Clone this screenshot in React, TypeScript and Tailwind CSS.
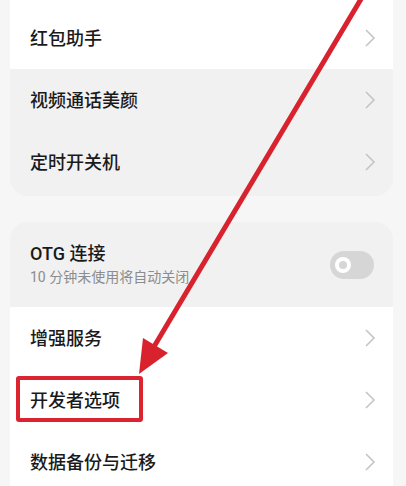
import React from 'react';

const font = { fontFamily: 'Roboto, "Noto Sans CJK SC", sans-serif' };
const titleFont = { fontFamily: 'Roboto, "Noto Sans CJK SC Medium", "Noto Sans CJK SC", sans-serif' };

function Chevron() {
  return (
    <svg width="12" height="20" viewBox="0 0 12 20" className="shrink-0">
      <path d="M2 2 L10 10 L2 18" fill="none" stroke="#c4c4c4" strokeWidth="1.6" />
    </svg>
  );
}

function Row({ label, gray }: { label: string; gray?: boolean }) {
  return (
    <div className={`flex h-[62px] items-center justify-between pl-[20px] pr-[17px] ${gray ? 'bg-[#f1f1f1]' : 'bg-white'}`}>
      <span className="text-[18px] text-[#1a1a1a]" style={titleFont}>{label}</span>
      <Chevron />
    </div>
  );
}

export default function App() {
  return (
    <div className="relative h-[486px] w-[406px] overflow-hidden bg-[#f6f6f6]" style={font}>
      <div className="ml-[10px] w-[383px] overflow-hidden rounded-b-[18px]">
        <div className="flex h-[69px] items-center justify-between bg-white pl-[20px] pr-[17px] pt-[7px]">
          <span className="text-[18px] text-[#1a1a1a]" style={titleFont}>红包助手</span>
          <Chevron />
        </div>
        <Row label="视频通话美颜" gray />
        <Row label="定时开关机" gray />
        <div className="h-[3px] bg-[#f1f1f1]" />
      </div>

      <div className="ml-[10px] mt-[26px] w-[383px] overflow-hidden rounded-t-[18px]">
        <div className="flex h-[85px] items-center justify-between bg-[#f1f1f1] pl-[20px] pr-[19px]">
          <div className="flex flex-col">
            <span className="text-[18px] font-medium leading-[24px] text-[#1a1a1a]" style={titleFont}>OTG 连接</span>
            <span className="mt-[1px] text-[14px] leading-[20px] text-[#8c8c8c]">10 分钟未使用将自动关闭</span>
          </div>
          <div className="flex h-[28px] w-[44px] items-center rounded-full bg-[#d6d6d6] pl-[5px]">
            <div className="flex h-[16px] w-[16px] items-center justify-center rounded-full bg-white">
              <div className="h-[8px] w-[8px] rounded-full bg-[#d6d6d6]" />
            </div>
          </div>
        </div>
        <Row label="增强服务" />
        <Row label="开发者选项" />
        <Row label="数据备份与迁移" />
      </div>

      <div className="absolute left-[16px] top-[376px] h-[46px] w-[127px] rounded-[3px] border-[4px] border-[#dc2330]" />

      <svg className="absolute left-0 top-0" width="406" height="486" viewBox="0 0 406 486">
        <line x1="364" y1="-6" x2="152" y2="350" stroke="#d8232f" strokeWidth="5" strokeLinecap="round" />
        <polygon points="139,374 143,338 168,353" fill="#d8232f" />
      </svg>
    </div>
  );
}
